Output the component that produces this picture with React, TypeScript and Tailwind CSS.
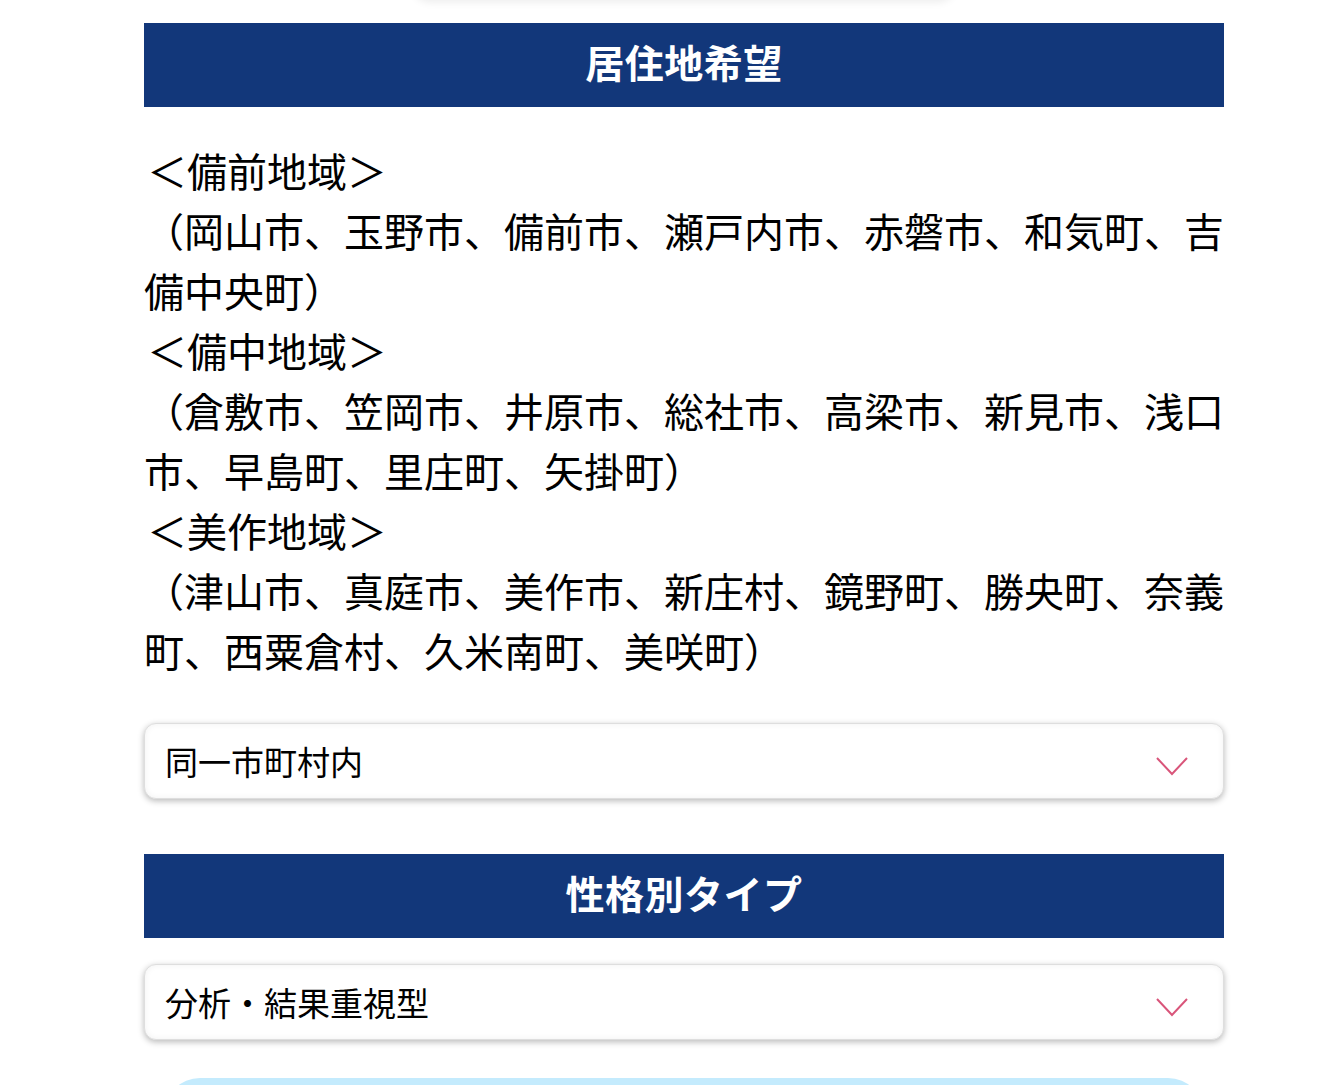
const font = { fontFamily: '"Noto Sans CJK JP", "Noto Sans", sans-serif' };

function SectionTitle({ children }: { children: React.ReactNode }) {
  return (
    <h2 className="flex h-[84px] items-center justify-center bg-[#12377a] pb-[8px] text-[39px] font-bold tracking-[0.5px] text-white">
      {children}
    </h2>
  );
}

function Chevron() {
  return (
    <svg className="mt-[10px]" width="34" height="22" viewBox="0 0 34 22" fill="none">
      <path d="M2 3 L17 19 L32 3" stroke="#d9557a" strokeWidth="2" />
    </svg>
  );
}

function SelectBox({ value }: { value: string }) {
  return (
    <div className="flex h-[76px] items-center justify-between rounded-[12px] border border-[#dedede] bg-white pr-[34px] pl-[20px] shadow-[0_2px_6px_rgba(0,0,0,0.28),inset_0_0_6px_rgba(0,0,0,0.06)]">
      <span className="text-[33px] leading-none text-black">{value}</span>
      <Chevron />
    </div>
  );
}

export default function App() {
  return (
    <div className="min-h-[1085px] overflow-hidden bg-white pl-[144px]" style={font}>
      <div className="w-[1080px]">
        {/* bottom of the element above */}
        <div className="mx-auto -mt-[30px] h-[30px] w-[540px] rounded-[20px] bg-white shadow-[0_2px_8px_rgba(0,0,0,0.08)]" />
        <div className="mt-[23px]">
          <SectionTitle>居住地希望</SectionTitle>
        </div>

        <div className="mt-[33px] text-[40px] leading-[60px] text-black">
          <p className="pl-[3px]">＜備前地域＞</p>
          <p>（岡山市、玉野市、備前市、瀬戸内市、赤磐市、和気町、吉備中央町）</p>
          <p className="pl-[3px]">＜備中地域＞</p>
          <p>（倉敷市、笠岡市、井原市、総社市、高梁市、新見市、浅口市、早島町、里庄町、矢掛町）</p>
          <p className="pl-[3px]">＜美作地域＞</p>
          <p>（津山市、真庭市、美作市、新庄村、鏡野町、勝央町、奈義町、西粟倉村、久米南町、美咲町）</p>
        </div>

        <div className="mt-[43px]">
          <SelectBox value="同一市町村内" />
        </div>

        <div className="mt-[55px]">
          <SectionTitle>性格別タイプ</SectionTitle>
        </div>

        <div className="mt-[26px]">
          <SelectBox value="分析・結果重視型" />
        </div>

        <div className="mx-auto mt-[38px] h-[80px] w-[1040px] rounded-[36px] bg-[#c4ebfd]" />
      </div>
    </div>
  );
}
